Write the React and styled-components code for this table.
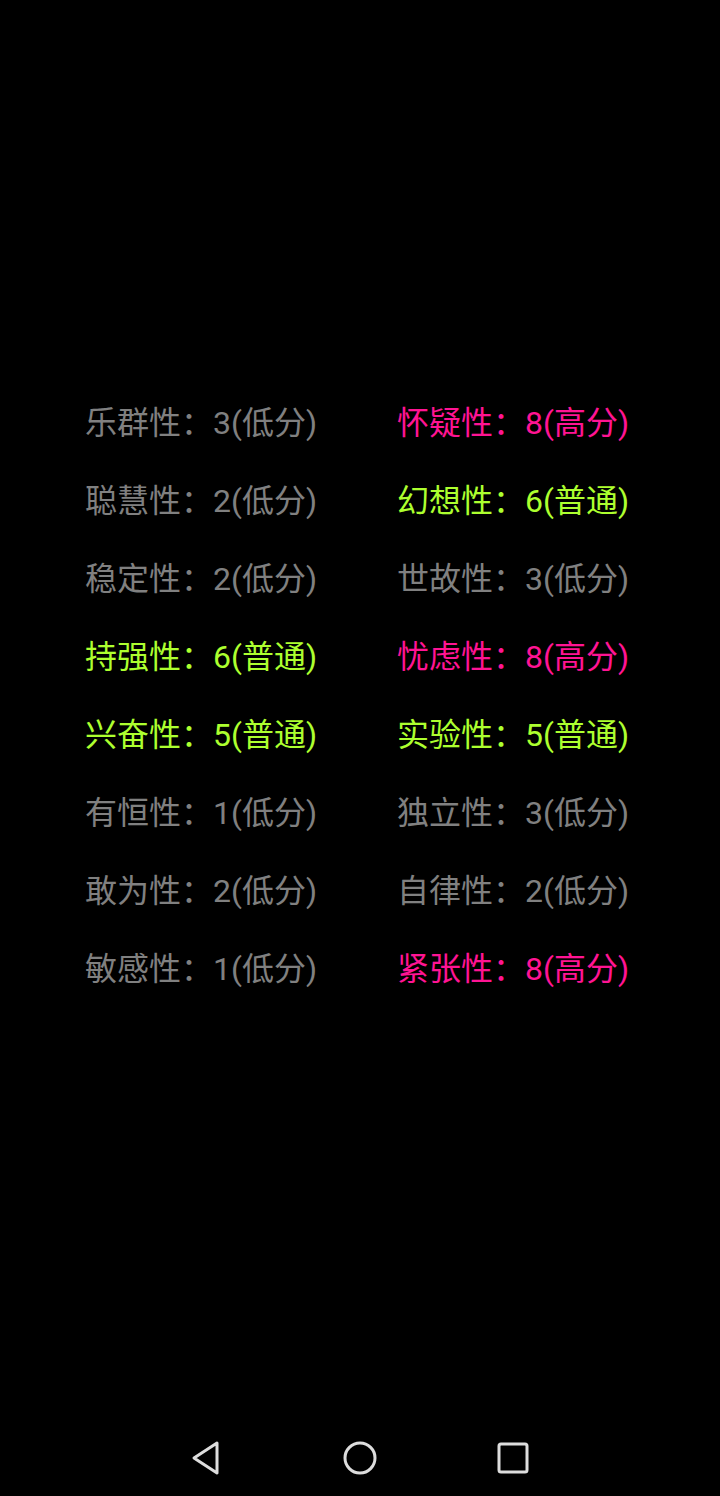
import React from "react";
import styled, { createGlobalStyle } from "styled-components";

const Global = createGlobalStyle`
  html, body { margin: 0; padding: 0; background: #000; }
  body { font-family: Roboto, "Noto Sans CJK SC", "Noto Sans", sans-serif; }
`;

const Page = styled.div`
  width: 720px;
  height: 1496px;
  background: #000;
  display: flex;
  flex-direction: column;
`;

const Grid = styled.div`
  display: grid;
  grid-template-columns: 312px 1fr;
  grid-auto-rows: 78px;
  padding: 384px 0 0 85px;
`;

const colors = { low: "#808080", mid: "#adff2f", high: "#ff1493" };

const Item = styled.div`
  font-size: 32px;
  line-height: 78px;
  white-space: nowrap;
  color: ${(p) => colors[p.$level]};
`;

const NavBar = styled.div`
  margin-top: auto;
  height: 76px;
  display: flex;
  align-items: center;
  justify-content: center;
`;

const NavSlot = styled.div`
  width: 153px;
  display: flex;
  justify-content: center;
  align-items: center;
`;

const levelOf = (s) => (s.includes("高") ? "high" : s.includes("普") ? "mid" : "low");

const items = [
  ["乐群性：3(低分)", "怀疑性：8(高分)"],
  ["聪慧性：2(低分)", "幻想性：6(普通)"],
  ["稳定性：2(低分)", "世故性：3(低分)"],
  ["持强性：6(普通)", "忧虑性：8(高分)"],
  ["兴奋性：5(普通)", "实验性：5(普通)"],
  ["有恒性：1(低分)", "独立性：3(低分)"],
  ["敢为性：2(低分)", "自律性：2(低分)"],
  ["敏感性：1(低分)", "紧张性：8(高分)"],
];

export default function App() {
  return (
    <Page>
      <Global />
      <Grid>
        {items.flat().map((t, i) => (
          <Item key={i} $level={levelOf(t)}>{t}</Item>
        ))}
      </Grid>
      <NavBar>
        <NavSlot>
          <svg width="36" height="36" viewBox="0 0 36 36">
            <path d="M28 3 L5 18 L28 33 Z" fill="none" stroke="#ddd" strokeWidth="3" strokeLinejoin="round" />
          </svg>
        </NavSlot>
        <NavSlot>
          <svg width="36" height="36" viewBox="0 0 36 36">
            <circle cx="18" cy="18" r="15" fill="none" stroke="#ddd" strokeWidth="3" />
          </svg>
        </NavSlot>
        <NavSlot>
          <svg width="36" height="36" viewBox="0 0 36 36">
            <rect x="4" y="4" width="28" height="28" rx="2" fill="none" stroke="#ddd" strokeWidth="3" />
          </svg>
        </NavSlot>
      </NavBar>
    </Page>
  );
}
